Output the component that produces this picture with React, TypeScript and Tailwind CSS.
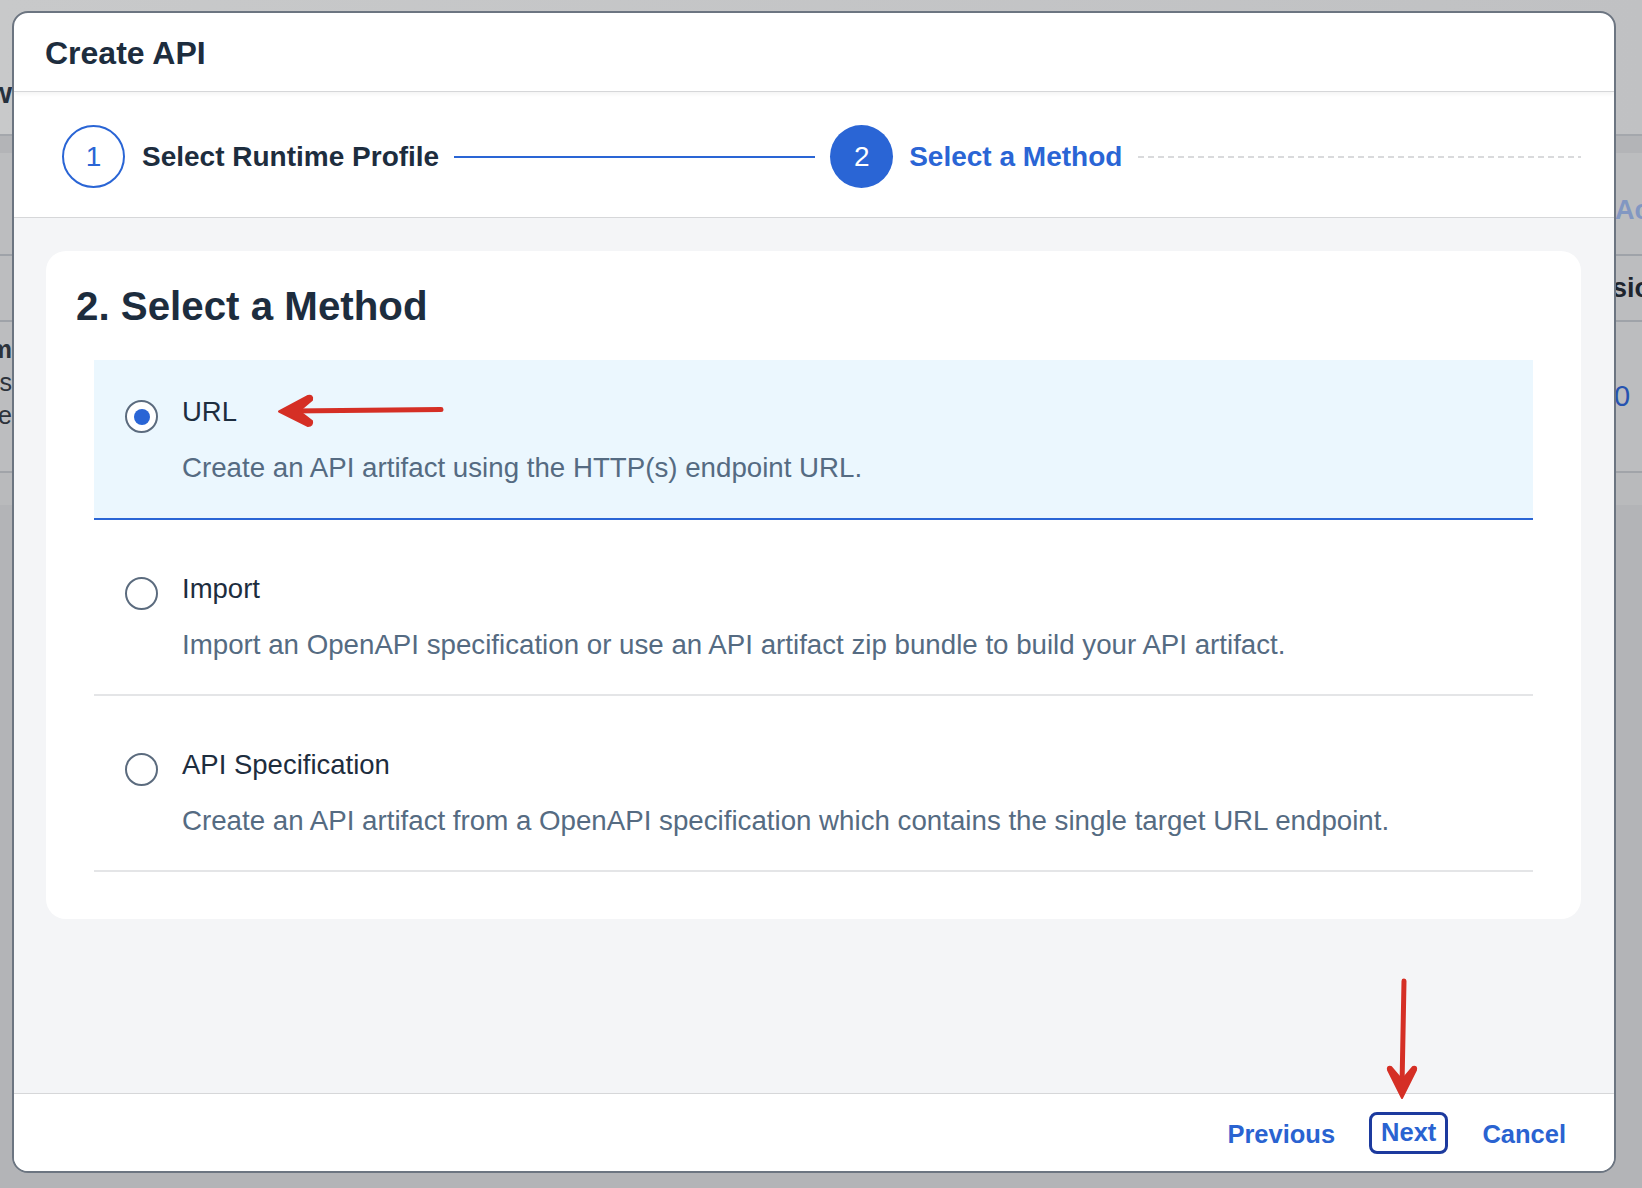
import React from "react";

type Method = {
  id: string;
  label: string;
  description: string;
};

const methods: Method[] = [
  { id: "url", label: "URL", description: "Create an API artifact using the HTTP(s) endpoint URL." },
  {
    id: "import",
    label: "Import",
    description: "Import an OpenAPI specification or use an API artifact zip bundle to build your API artifact.",
  },
  {
    id: "spec",
    label: "API Specification",
    description: "Create an API artifact from a OpenAPI specification which contains the single target URL endpoint.",
  },
];

function Radio({ checked }: { checked: boolean }) {
  return (
    <span className="flex h-[33px] w-[33px] shrink-0 items-center justify-center rounded-full border-2 border-[#5b6b7e] bg-white">
      {checked && <span className="h-[16px] w-[16px] rounded-full bg-[#2a65d5]" />}
    </span>
  );
}

function MethodOption({ method, selected }: { method: Method; selected: boolean }) {
  return (
    <div className="pt-[19px]">
      <div
        className={
          selected
            ? "flex h-[160px] gap-[24px] border-b-2 border-[#2a65d5] bg-[#ebf7fe] pl-[31px] pt-[35px]"
            : "flex h-[157px] gap-[24px] border-b-2 border-[#e4e5e7] pl-[31px] pt-[33px]"
        }
      >
        <div className="mt-[5px]">
          <Radio checked={selected} />
        </div>
        <div className="flex flex-col">
          <span className="text-[27.5px] leading-[34px] text-[#1d2d3e]">{method.label}</span>
          <span className="mt-[23px] text-[27.7px] leading-[32px] text-[#556b82]">{method.description}</span>
        </div>
      </div>
    </div>
  );
}

// page behind the modal, only the edges show
function BackdropPage() {
  return (
    <div className="flex h-full w-full flex-col bg-[#b4b5b8]">
      <div className="flex h-[134px] items-start justify-between bg-gradient-to-r from-[#c8c9ca] to-[#c0c1c3]">
        <div className="mt-[77px] flex w-[12px] justify-end overflow-hidden text-[30px] font-bold leading-[32px] text-[#27313d]">
          <span className="shrink-0">Overview</span>
        </div>
      </div>
      <div className="h-[19px] border-t-2 border-[#a4a7ac] bg-[#b3b4b7]" />
      <div className="flex h-[101px] items-center justify-end bg-[#bcbdbf]">
        <div className="w-[27px] overflow-hidden pt-[14px] text-[27px] font-bold text-[#8297c2]">
          <span className="whitespace-nowrap">Actions</span>
        </div>
      </div>
      <div className="flex h-[66px] items-center justify-end border-t-2 border-[#9fa3a9] bg-[#bcbdbf]">
        <div className="w-[27px] overflow-hidden text-[27px] font-bold text-[#1e252e]">
          <span className="ml-[-3px] whitespace-nowrap">sion</span>
        </div>
      </div>
      <div className="flex h-[151px] items-start justify-between border-t-2 border-[#9fa3a9] bg-[#bcbdbf]">
        <div className="mt-[11px] flex w-[12px] flex-col items-end overflow-hidden text-[25px] leading-[33px] text-[#2c333b]">
          <span className="shrink-0 font-bold">Platform</span>
          <span className="shrink-0">Always</span>
          <span className="shrink-0">Runtime</span>
        </div>
        <div className="mt-[53px] w-[27px] overflow-hidden text-[29px] text-[#2653b0]">
          <span className="ml-[-1px] whitespace-nowrap">0</span>
        </div>
      </div>
      <div className="h-[34px] border-t-2 border-[#a1a4a9] bg-[#b9babc]" />
      <div className="flex-1 bg-[#b3b4b7]" />
    </div>
  );
}

function Stepper() {
  return (
    <div className="flex h-[126px] items-center border-b border-[#d6d7d9] bg-white pl-[48px] pr-[33px] pt-[4px] shadow-[0_2px_4px_rgba(0,0,0,0.06)]">
      <div className="flex h-[63px] w-[63px] shrink-0 items-center justify-center rounded-full border-2 border-[#2a65d5] text-[28px] text-[#2a65d5]">
        1
      </div>
      <span className="ml-[17px] whitespace-nowrap text-[28px] font-bold text-[#1d2d3e]">Select Runtime Profile</span>
      <div className="ml-[15px] h-[2px] w-[361px] bg-[#2a65d5]" />
      <div className="ml-[15px] flex h-[63px] w-[63px] shrink-0 items-center justify-center rounded-full bg-[#2a65d5] text-[28px] text-white">
        2
      </div>
      <span className="ml-[16px] whitespace-nowrap text-[28px] font-bold text-[#2a65d5]">Select a Method</span>
      <div className="ml-[16px] h-[2px] flex-1 bg-[repeating-linear-gradient(90deg,#d9dadc_0_6px,transparent_6px_10px)]" />
    </div>
  );
}

export default function App() {
  const selected = "url";
  return (
    <div className="relative h-[1188px] w-[1642px] overflow-hidden font-['Liberation_Sans',Arial,sans-serif]">
      <BackdropPage />

      <div className="absolute left-[12px] top-[11px] flex h-[1162px] w-[1604px] flex-col overflow-hidden rounded-[16px] border-2 border-[#6c7581] bg-white">
        <div className="relative z-10 flex h-[79px] shrink-0 items-center border-b border-[#d6d7d9] pl-[31px] pt-[2px] shadow-[0_2px_4px_rgba(0,0,0,0.05)]">
          <h1 className="text-[32px] font-bold text-[#1d2d3e]">Create API</h1>
        </div>

        <Stepper />

        <div className="flex-1 bg-[#f4f5f7] pl-[32px] pr-[33px] pt-[33px]">
          <div className="flex h-[668px] flex-col rounded-[20px] bg-white pt-[32px]">
            <h2 className="pl-[30px] text-[40.3px] font-bold leading-[48px] text-[#1d2d3e]">2. Select a Method</h2>
            <div className="mx-[48px] mt-[10px] flex flex-col">
              {methods.map((m) => (
                <MethodOption key={m.id} method={m} selected={m.id === selected} />
              ))}
            </div>
          </div>
        </div>

        <div className="flex h-[78px] shrink-0 items-center justify-end gap-[22px] border-t border-[#d6d7d9] bg-white pr-[36px]">
          <button className="h-[42px] rounded-[8px] border-[3px] border-transparent px-[9px] text-[25.5px] font-bold text-[#2a63d1]">
            Previous
          </button>
          <button className="h-[42px] rounded-[8px] border-[3px] border-[#1c3a9e] px-[9px] text-[25.5px] font-bold leading-none text-[#2a63d1]">
            Next
          </button>
          <button className="h-[42px] rounded-[8px] border-[3px] border-transparent px-[9px] text-[25.5px] font-bold text-[#2a63d1]">
            Cancel
          </button>
        </div>
      </div>

      {/* annotation arrows */}
      <svg className="absolute left-0 top-0" width="1642" height="1188" viewBox="0 0 1642 1188" fill="none">
        <path d="M441 409.5 L292 411" stroke="#d52f25" strokeWidth="5" strokeLinecap="round" />
        <path d="M279 411.5 L308 396 Q313 395 312 400 L299 411 L312 421 Q313 426 308 426 Z" fill="#d52f25" stroke="#d52f25" strokeWidth="2" strokeLinejoin="round" />
        <path d="M1404 981 L1402 1086" stroke="#d52f25" strokeWidth="5" strokeLinecap="round" />
        <path d="M1402 1098 L1388 1070 Q1387 1066 1391 1067 L1402 1080 L1413 1067 Q1417 1066 1416 1070 Z" fill="#d52f25" stroke="#d52f25" strokeWidth="2" strokeLinejoin="round" />
      </svg>
    </div>
  );
}
